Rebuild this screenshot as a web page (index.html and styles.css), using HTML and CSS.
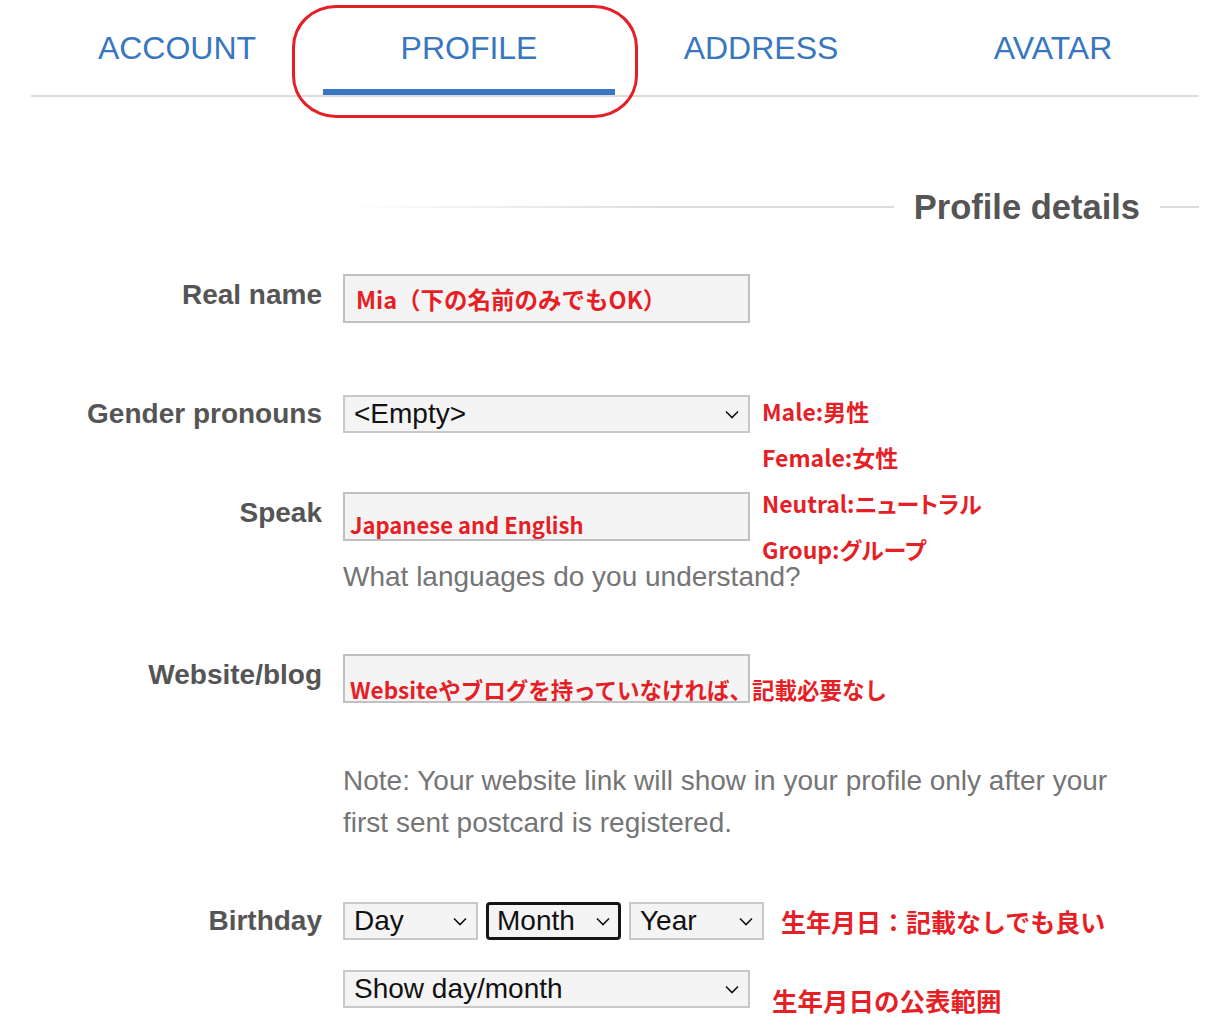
FILE: index.html
```html
<!DOCTYPE html>
<html lang="en">
<head>
<meta charset="utf-8">
<title>Profile</title>
<link rel="stylesheet" href="styles.css">
</head>
<body>
<div class="page">
  <nav class="tabs">
    <div class="tab">ACCOUNT</div>
    <div class="tab active">PROFILE</div>
    <div class="tab">ADDRESS</div>
    <div class="tab">AVATAR</div>
    <div class="loop"></div>
  </nav>

  <div class="legend">
    <span class="legend-line left"></span>
    <h2 class="legend-title">Profile details</h2>
    <span class="legend-line right"></span>
  </div>

  <div class="row row-name">
    <label class="label">Real name</label>
    <div class="cell">
      <div class="box box-name"><span class="note-red name-note">Mia（下の名前のみでもOK）</span></div>
    </div>
  </div>

  <div class="row row-gender">
    <label class="label">Gender pronouns</label>
    <div class="cell">
      <div class="select select-wide">
        <span>&lt;Empty&gt;</span>
        <svg class="chev" width="14" height="9" viewBox="0 0 14 9"><path d="M1 1.5 L7 7.5 L13 1.5" fill="none" stroke="#111" stroke-width="1.6"/></svg>
      </div>
      <div class="gender-notes">
        <div>Male:男性</div>
        <div>Female:女性</div>
        <div>Neutral:ニュートラル</div>
        <div>Group:グループ</div>
      </div>
    </div>
  </div>

  <div class="row row-speak">
    <label class="label">Speak</label>
    <div class="cell">
      <div class="box box-low"><span class="note-red">Japanese and English</span></div>
      <p class="help">What languages do you understand?</p>
    </div>
  </div>

  <div class="row row-web">
    <label class="label">Website/blog</label>
    <div class="cell">
      <div class="box box-lower"><span class="note-red web-note">Websiteやブログを持っていなければ、記載必要なし</span></div>
    </div>
  </div>

  <p class="help note">Note: Your website link will show in your profile only after your first sent postcard is registered.</p>

  <div class="row row-birth">
    <label class="label">Birthday</label>
    <div class="cell birth">
      <div class="select select-small">
        <span>Day</span>
        <svg class="chev" width="14" height="9" viewBox="0 0 14 9"><path d="M1 1.5 L7 7.5 L13 1.5" fill="none" stroke="#111" stroke-width="1.6"/></svg>
      </div>
      <div class="select select-small focused">
        <span>Month</span>
        <svg class="chev" width="14" height="9" viewBox="0 0 14 9"><path d="M1 1.5 L7 7.5 L13 1.5" fill="none" stroke="#111" stroke-width="1.6"/></svg>
      </div>
      <div class="select select-small">
        <span>Year</span>
        <svg class="chev" width="14" height="9" viewBox="0 0 14 9"><path d="M1 1.5 L7 7.5 L13 1.5" fill="none" stroke="#111" stroke-width="1.6"/></svg>
      </div>
      <span class="note-red big birth-note">生年月日：記載なしでも良い</span>
    </div>
  </div>

  <div class="row row-show">
    <span class="label"></span>
    <div class="cell show">
      <div class="select select-wide">
        <span>Show day/month</span>
        <svg class="chev" width="14" height="9" viewBox="0 0 14 9"><path d="M1 1.5 L7 7.5 L13 1.5" fill="none" stroke="#111" stroke-width="1.6"/></svg>
      </div>
      <span class="note-red big show-note">生年月日の公表範囲</span>
    </div>
  </div>
</div>
</body>
</html>
```

FILE: styles.css
```css
* { box-sizing: border-box; }
html, body { margin: 0; padding: 0; background: #fff; }
body { font-family: "Liberation Sans", Arial, sans-serif; color: #555; }

.page { padding: 0 30px 40px 31px; }

/* Tabs */
.tabs {
  position: relative;
  display: flex;
  border-bottom: 2px solid #dcdcdc;
}
.tab {
  flex: 1;
  text-align: center;
  font-size: 32px;
  line-height: 36px;
  color: #3877c0;
  padding-top: 30px;
  padding-bottom: 23px;
  border-bottom: 6px solid transparent;
}
.tab.active { border-bottom-color: #3a77c2; }
.loop {
  position: absolute;
  left: 261px;
  top: 5px;
  width: 346px;
  height: 113px;
  border: 3px solid #e61f27;
  border-radius: 44px / 42px;
}

/* Legend */
.legend {
  display: flex;
  align-items: center;
  margin-top: 90px;
  padding-left: 312px;
}
.legend-line { height: 2px; }
.legend-line.left {
  flex: 1;
  background: linear-gradient(to right, rgba(221,221,221,0), #dcdcdc 60%);
}
.legend-line.right { width: 39px; background: #dcdcdc; }
.legend-title {
  margin: 0 20px;
  font-size: 34.5px;
  line-height: 40px;
  font-weight: bold;
  color: #555;
}

/* Rows */
.row {
  display: grid;
  grid-template-columns: 291px 1fr;
  column-gap: 21px;
  align-items: start;
}
.label {
  text-align: right;
  font-size: 28px;
  line-height: 32px;
  font-weight: bold;
  color: #555;
}
.cell { position: relative; }

.row-name { margin-top: 47px; }
.row-name .label { padding-top: 5px; }
.row-gender { margin-top: 72px; }
.row-gender .label { padding-top: 3px; }
.row-speak { margin-top: 59px; }
.row-speak .label { padding-top: 5px; }
.row-web { margin-top: 56px; }
.row-web .label { padding-top: 5px; }
.row-birth { margin-top: 58px; }
.row-birth .label { padding-top: 3px; }
.row-show { margin-top: 30px; }

.box {
  width: 407px;
  height: 49px;
  background: #f4f4f4;
  border: 2px solid #c0c0c0;
  display: flex;
  align-items: center;
  padding-left: 11px;
  white-space: nowrap;
}
.box-low { padding-left: 5px; padding-top: 15px; }
.box-lower { padding-left: 5px; padding-top: 20px; }

.note-red {
  font-family: "Noto Sans CJK JP", "Noto Sans", sans-serif;
  font-weight: bold;
  color: #e61f27;
  font-size: 22px;
  line-height: 28px;
  white-space: nowrap;
}
.name-note { font-size: 23.5px; }
.web-note { font-size: 22.5px; }
.note-red.big { font-size: 25px; }
.show-note.big { font-size: 25.5px; }

.select {
  height: 38px;
  background: #f4f4f4;
  border: 2px solid #c8c8c8;
  display: flex;
  align-items: center;
  justify-content: space-between;
  padding: 0 9px 0 9px;
  font-size: 28px;
  color: #111;
}
.select-wide { width: 407px; }
.select-small { width: 135px; }
.select.focused { border: 3px solid #151515; border-radius: 4px; padding-left: 8px; padding-right: 8px; }
.chev { display: block; flex: none; }

.gender-notes {
  position: absolute;
  left: 419px;
  top: -7px;
  font-family: "Noto Sans CJK JP", "Noto Sans", sans-serif;
  font-weight: bold;
  color: #e61f27;
  font-size: 23px;
  line-height: 46px;
  white-space: nowrap;
  font-feature-settings: "palt";
}

.help {
  margin: 15px 0 0;
  font-size: 28px;
  line-height: 42px;
  color: #757575;
}
.note {
  margin: 57px 0 0 312px;
  max-width: 780px;
}

.birth { display: flex; align-items: center; gap: 8px; }
.birth-note { margin-left: 9px; }
.show { display: flex; align-items: flex-start; }
.show-note { margin-left: 22px; margin-top: 16px; }
```
